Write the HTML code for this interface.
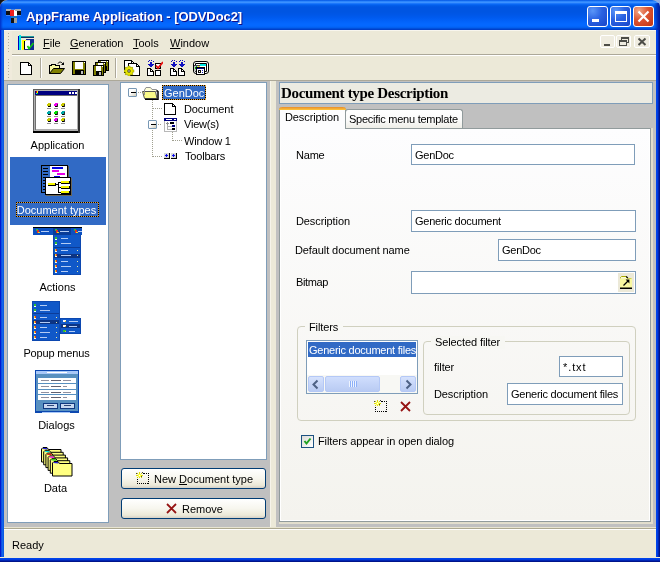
<!DOCTYPE html>
<html>
<head>
<meta charset="utf-8">
<title>AppFrame Application - [ODVDoc2]</title>
<style>
html,body{margin:0;padding:0;}
body{width:660px;height:562px;overflow:hidden;position:relative;background:linear-gradient(to right,#101010 50%,#8aaae8 50%);font-family:"Liberation Sans",sans-serif;font-size:11px;color:#000;}
#win,#win div,#win svg.ic{position:absolute;box-sizing:border-box;}
#win{left:0;top:0;width:660px;height:562px;overflow:hidden;background:#c0c0c0;border-radius:7px 7px 0 0;}
.t{white-space:nowrap;line-height:13px;height:13px;}
#win{will-change:transform;}
#title{left:0;top:0;width:660px;height:30px;border-radius:8px 8px 0 0;
background:linear-gradient(to bottom,#0054e3 0px,#2d86fc 1.5px,#3c91ff 2.5px,#1c78fb 3.5px,#0866f3 4.5px,#025de9 5.5px,#0055e2 7px,#0055e2 12px,#0057e8 15px,#005bf0 18px,#0262f9 21px,#0468ff 24px,#0468ff 26px,#0260f0 27.5px,#0050dc 28.5px,#0038c0 30px);}
#titletext{left:26px;top:9px;font-weight:bold;font-size:13px;color:#fff;letter-spacing:-0.07px;text-shadow:1px 1px 0 #0f1089;line-height:16px;height:16px;white-space:nowrap;}
.cap{top:6px;width:21px;height:21px;border:1px solid #fff;border-radius:3px;background:radial-gradient(circle at 25% 20%,#5a96f8 0%,#2a62e2 45%,#1845c8 100%);}
#bl{left:0;top:30px;width:4px;height:532px;background:linear-gradient(to right,#0019cf 0,#0019cf 1px,#0831d9 1px,#166aee 2px,#0855dd 4px);}
#br{left:656px;top:30px;width:4px;height:532px;background:linear-gradient(to right,#0044ea 0,#0044ea 1px,#003ce0 1px,#003ce0 2px,#0026b4 2px,#0026b4 3px,#00148a 3px);}
#bb{left:0;top:557px;width:660px;height:5px;background:linear-gradient(to bottom,#f6efd2 0,#f6efd2 1px,#0044ea 1px,#0044ea 2px,#003ce0 2px,#003ce0 3px,#0026b4 3px,#0026b4 4px,#00148a 4px);}
#menubar{left:4px;top:30px;width:652px;height:25px;background:#ece9d8;border-top:1px solid #f8f6ee;border-bottom:1px solid #aca899;}
#toolbar{left:4px;top:55px;width:652px;height:26px;background:#ece9d8;border-top:1px solid #fff;border-bottom:1px solid #aca899;}
.grip{left:8px;width:1px;background:repeating-linear-gradient(to bottom,#b4b0a0 0,#b4b0a0 1px,transparent 1px,transparent 3px);}
#gstrip{left:4px;top:31px;width:8px;height:49px;background:#f0ebdc;}
.menu{top:6px;}
.sep{width:2px;height:20px;border-left:1px solid #aca899;border-right:1px solid #fff;}
.mdi{top:35px;width:15px;height:13px;border:1px solid #fff;border-radius:2px;background:#efece0;}
.box{background:#fff;border:1px solid #7f9db9;}
.lbl{text-align:center;left:0;width:100px;}
.btn{border:1px solid #003c74;border-radius:3px;background:linear-gradient(to bottom,#fff 0%,#f7f6ee 50%,#ece9d8 85%,#d6d0c5 100%);}
.edit{background:#fff;border:1px solid #7f9db9;}
.edit .t{left:3px;top:4px;letter-spacing:-0.25px;}
.f{letter-spacing:-0.1px;}
.grp{border:1px solid #d0d0bf;border-radius:4px;}
.gl{padding:0 2px;}
.exp{width:9px;height:9px;border:1px solid #7898b5;border-radius:1px;background:linear-gradient(135deg,#fff 0%,#fff 40%,#d4cfbc 100%);}
.dv{width:1px;background:repeating-linear-gradient(to bottom,#a0a090 0,#a0a090 1px,transparent 1px,transparent 2px);}
.dh{height:1px;background:repeating-linear-gradient(to right,#a0a090 0,#a0a090 1px,transparent 1px,transparent 2px);}
#status{left:4px;top:527px;width:652px;height:31px;background:#ece9d8;border-top:1px solid #e8e4d0;}
#status:before{content:'';position:absolute;left:0;top:0;width:652px;height:2px;background:linear-gradient(#aca890 0,#aca890 1px,#fff 1px,#fff 2px);}
.tr{letter-spacing:-0.2px;}
.fr{background:
 repeating-linear-gradient(to right,#000 0,#000 1px,#e8a030 1px,#e8a030 2px) left top/100% 1px no-repeat,
 repeating-linear-gradient(to right,#000 0,#000 1px,#e8a030 1px,#e8a030 2px) left bottom/100% 1px no-repeat,
 repeating-linear-gradient(to bottom,#000 0,#000 1px,#e8a030 1px,#e8a030 2px) left top/1px 100% no-repeat,
 repeating-linear-gradient(to bottom,#000 0,#000 1px,#e8a030 1px,#e8a030 2px) right top/1px 100% no-repeat;}

</style>
</head>
<body>
<div id="win">
<div id="title"></div>
<svg class="ic" style="left:6px;top:8px" width="16" height="16" viewBox="0 0 16 16" shape-rendering="crispEdges"><rect x="0" y="1" width="15" height="7" fill="#c8d8f0" opacity="0.35"/><rect x="0" y="1" width="5" height="2" fill="#b0b0b0"/><rect x="0" y="3" width="5" height="4" fill="#101010"/><rect x="4" y="2" width="4" height="6" fill="#f02020"/><rect x="8" y="2" width="3" height="6" fill="#ffffff"/><rect x="9" y="1" width="6" height="2" fill="#b0b0b0"/><rect x="11" y="3" width="4" height="4" fill="#101010"/><rect x="5" y="8" width="6" height="2" fill="#1878c8"/><rect x="5" y="10" width="3" height="5" fill="#101010"/><rect x="8" y="10" width="3" height="5" fill="#a0a0a0"/></svg>
<div id="titletext">AppFrame Application - [ODVDoc2]</div>
<div class="cap" style="left:587px"><div style="left:4px;top:12px;width:7px;height:3px;background:#fff"></div></div>
<div class="cap" style="left:610px"><div style="left:4px;top:4px;width:12px;height:11px;border:1px solid #fff;border-top-width:3px"></div></div>
<div class="cap" style="left:633px;background:radial-gradient(circle at 25% 20%,#f0a888 0%,#dc5432 45%,#c03410 100%)"><svg class="ic" width="19" height="19" viewBox="0 0 19 19" style="left:0;top:0"><path d="M4.5 4.5 L14.5 14.5 M14.5 4.5 L4.5 14.5" stroke="#fff" stroke-width="2.2" fill="none"/></svg></div>
<div id="bl"></div><div id="br"></div><div id="bb"></div>
<div style="left:0;top:3px;width:3px;height:27px;background:linear-gradient(to right,#0030c8,rgba(0,60,220,0))"></div><div style="left:654px;top:3px;width:6px;height:27px;background:linear-gradient(to left,#001c9a 0,#0028b0 30%,rgba(0,50,200,0) 100%)"></div>
<div id="menubar"><div class="t menu" style="left:39px"><u>F</u>ile</div><div class="t menu" style="left:66px;letter-spacing:-0.12px"><u>G</u>eneration</div><div class="t menu" style="left:129px"><u>T</u>ools</div><div class="t menu" style="left:166px"><u>W</u>indow</div></div>
<svg class="ic" style="left:18px;top:35px" width="16" height="15" viewBox="0 0 16 15" shape-rendering="crispEdges"><rect x="0" y="1" width="1" height="14" fill="#0000c0"/><rect x="1" y="0" width="2" height="15" fill="#00e8e8"/><rect x="3" y="1" width="13" height="1" fill="#20a0a0"/><rect x="3" y="2" width="13" height="1" fill="#103060"/><rect x="4" y="5" width="4" height="10" fill="#ffff00"/><rect x="6" y="6" width="1" height="8" fill="#000000"/><rect x="7" y="6" width="5" height="8" fill="#ffffff"/><rect x="12" y="4" width="4" height="11" fill="#102890"/><rect x="6" y="14" width="10" height="1" fill="#102890"/><rect x="8" y="4" width="8" height="1" fill="#102890"/><path d="M9.5 11 L11 13.5 L15.5 8" stroke="#10c810" stroke-width="1.6" fill="none" shape-rendering="auto"/></svg>
<div class="mdi" style="left:600px"><div style="left:3px;top:8px;width:6px;height:2px;background:#4d4d48"></div></div>
<div class="mdi" style="left:616px"><div style="left:4px;top:1px;width:8px;height:6px;border:1px solid #4d4d48;border-top-width:2px"></div><div style="left:2px;top:4px;width:8px;height:6px;border:1px solid #4d4d48;border-top-width:2px;background:#efece0"></div></div>
<div class="mdi" style="left:634px;width:16px"><svg class="ic" width="14" height="11" viewBox="0 0 14 11" style="left:0;top:0"><path d="M3.5 2.5 L10.5 9 M10.5 2.5 L3.5 9" stroke="#4d4d48" stroke-width="2" fill="none"/></svg></div>
<div id="toolbar"></div>
<div id="gstrip"></div><div class="grip" style="top:33px;height:19px"></div><div class="grip" style="top:59px;height:19px"></div>
<div class="sep" style="left:40px;top:58px"></div><div class="sep" style="left:115px;top:58px"></div>
<svg class="ic" style="left:20px;top:62px" width="12" height="13" viewBox="0 0 12 13" shape-rendering="crispEdges"><path d="M0.5 0.5 H8.5 L11.5 3.5 V12.5 H0.5 Z" fill="#fff" stroke="#000" stroke-width="1" shape-rendering="crispEdges"/><path d="M8.5 0.5 V3.5 H11.5" fill="none" stroke="#000" stroke-width="1"/></svg>
<svg class="ic" style="left:49px;top:61px" width="16" height="13" viewBox="0 0 16 13" shape-rendering="crispEdges"><path d="M0.5 12.5 V4.5 H2 L3 3.5 H6 L7 4.5 H10.5 V7" fill="#f8f8a0" stroke="#000" stroke-width="1"/><path d="M0.5 12.5 L4.5 7.5 H15.5 L11.5 12.5 Z" fill="#808000" stroke="#000" stroke-width="1" shape-rendering="auto"/><path d="M9 2.5 C10 0.5 13 0.5 14 3.5" fill="none" stroke="#000" stroke-width="1" shape-rendering="auto"/><path d="M12 4 H15 V1 Z" fill="#000" shape-rendering="auto"/></svg>
<svg class="ic" style="left:72px;top:61px" width="14" height="14" viewBox="0 0 14 14" shape-rendering="crispEdges"><rect x="0" y="0" width="14" height="14" fill="#000"/><rect x="1" y="1" width="12" height="12" fill="#808000"/><rect x="3" y="1" width="8" height="6.5" fill="#fff"/><rect x="3" y="9" width="9" height="4" fill="#000"/><rect x="9" y="10" width="2" height="3" fill="#c0c0c0"/><rect x="12" y="1" width="1" height="1" fill="#fff"/></svg>
<svg class="ic" style="left:93px;top:60px" width="16" height="16" viewBox="0 0 16 16" shape-rendering="crispEdges"><rect x="5" y="0" width="11" height="11" fill="#000"/><rect x="6" y="1" width="9" height="9" fill="#808000"/><rect x="8" y="1" width="5" height="5.0" fill="#fff"/><rect x="8" y="6" width="6" height="4" fill="#000"/><rect x="11" y="7" width="2" height="3" fill="#c0c0c0"/><rect x="14" y="1" width="1" height="1" fill="#fff"/><rect x="2" y="2" width="11" height="11" fill="#000"/><rect x="3" y="3" width="9" height="9" fill="#808000"/><rect x="5" y="3" width="5" height="5.0" fill="#fff"/><rect x="5" y="8" width="6" height="4" fill="#000"/><rect x="8" y="9" width="2" height="3" fill="#c0c0c0"/><rect x="11" y="3" width="1" height="1" fill="#fff"/><rect x="0" y="5" width="11" height="11" fill="#000"/><rect x="1" y="6" width="9" height="9" fill="#808000"/><rect x="3" y="6" width="5" height="5.0" fill="#fff"/><rect x="3" y="11" width="6" height="4" fill="#000"/><rect x="6" y="12" width="2" height="3" fill="#c0c0c0"/><rect x="9" y="6" width="1" height="1" fill="#fff"/></svg>
<svg class="ic" style="left:124px;top:60px" width="16" height="16" viewBox="0 0 16 16" shape-rendering="crispEdges"><path d="M0.5 0.5 H7.5 L10.5 3.5 V12.5 H0.5 Z" fill="#fff" stroke="#000" stroke-width="1" shape-rendering="crispEdges"/><path d="M7.5 0.5 V3.5 H10.5" fill="none" stroke="#000" stroke-width="1"/><path d="M4.5 3.5 H12.5 L15.5 6.5 V15.5 H4.5 Z" fill="#fff" stroke="#000" stroke-width="1" shape-rendering="crispEdges"/><path d="M12.5 3.5 V6.5 H15.5" fill="none" stroke="#000" stroke-width="1"/><g shape-rendering="auto"><rect x="7.80" y="9.90" width="2.2" height="2.2" fill="#d8d800" stroke="#909000" stroke-width="0.4"/><rect x="6.66" y="12.66" width="2.2" height="2.2" fill="#d8d800" stroke="#909000" stroke-width="0.4"/><rect x="3.90" y="13.80" width="2.2" height="2.2" fill="#d8d800" stroke="#909000" stroke-width="0.4"/><rect x="1.14" y="12.66" width="2.2" height="2.2" fill="#d8d800" stroke="#909000" stroke-width="0.4"/><rect x="0.00" y="9.90" width="2.2" height="2.2" fill="#d8d800" stroke="#909000" stroke-width="0.4"/><rect x="1.14" y="7.14" width="2.2" height="2.2" fill="#d8d800" stroke="#909000" stroke-width="0.4"/><rect x="3.90" y="6.00" width="2.2" height="2.2" fill="#d8d800" stroke="#909000" stroke-width="0.4"/><rect x="6.66" y="7.14" width="2.2" height="2.2" fill="#d8d800" stroke="#909000" stroke-width="0.4"/><circle cx="5" cy="11" r="3.4" fill="#e8e800"/><circle cx="5" cy="11" r="1.7" fill="#404020"/><circle cx="5" cy="11" r="0.8" fill="#e8e8e8"/></g></svg>
<svg class="ic" style="left:147px;top:60px" width="16" height="16" viewBox="0 0 16 16" shape-rendering="crispEdges"><rect x="0.5" y="1" width="1" height="1" fill="#1010c0"/><rect x="2.0" y="0" width="1" height="1" fill="#1010c0"/><rect x="4.0" y="0" width="1" height="1" fill="#1010c0"/><rect x="5.5" y="1" width="1" height="1" fill="#1010c0"/><rect x="2.5" y="2" width="2" height="3" fill="#1010c0"/><rect x="0.5" y="4" width="6" height="1" fill="#1010c0"/><rect x="1.5" y="5" width="4" height="1" fill="#1010c0"/><rect x="2.5" y="6" width="2" height="1" fill="#1010c0"/><path d="M0.5 8.5 H3.5 L6.5 11.5 V15.5 H0.5 Z" fill="#fff" stroke="#000" stroke-width="1" shape-rendering="crispEdges"/><path d="M3.5 8.5 V11.5 H6.5" fill="none" stroke="#000" stroke-width="1"/><rect x="8" y="3" width="6" height="6" fill="#000"/><rect x="9" y="4" width="4" height="4" fill="#fff"/><rect x="8" y="10" width="6" height="6" fill="#000"/><rect x="9" y="11" width="4" height="4" fill="#fff"/><path d="M9 5.5 L11 8 L16 2" stroke="#e81010" stroke-width="1.8" fill="none" shape-rendering="auto"/></svg>
<svg class="ic" style="left:170px;top:60px" width="16" height="16" viewBox="0 0 16 16" shape-rendering="crispEdges"><rect x="0.5" y="1" width="1" height="1" fill="#1010c0"/><rect x="2.0" y="0" width="1" height="1" fill="#1010c0"/><rect x="4.0" y="0" width="1" height="1" fill="#1010c0"/><rect x="5.5" y="1" width="1" height="1" fill="#1010c0"/><rect x="2.5" y="2" width="2" height="3" fill="#1010c0"/><rect x="0.5" y="4" width="6" height="1" fill="#1010c0"/><rect x="1.5" y="5" width="4" height="1" fill="#1010c0"/><rect x="2.5" y="6" width="2" height="1" fill="#1010c0"/><rect x="8.5" y="1" width="1" height="1" fill="#1010c0"/><rect x="10.0" y="0" width="1" height="1" fill="#1010c0"/><rect x="12.0" y="0" width="1" height="1" fill="#1010c0"/><rect x="13.5" y="1" width="1" height="1" fill="#1010c0"/><rect x="10.5" y="2" width="2" height="3" fill="#1010c0"/><rect x="8.5" y="4" width="6" height="1" fill="#1010c0"/><rect x="9.5" y="5" width="4" height="1" fill="#1010c0"/><rect x="10.5" y="6" width="2" height="1" fill="#1010c0"/><path d="M0.5 8.5 H3.5 L6.5 11.5 V15.5 H0.5 Z" fill="#fff" stroke="#000" stroke-width="1" shape-rendering="crispEdges"/><path d="M3.5 8.5 V11.5 H6.5" fill="none" stroke="#000" stroke-width="1"/><path d="M8.5 8.5 H11.5 L14.5 11.5 V15.5 H8.5 Z" fill="#fff" stroke="#000" stroke-width="1" shape-rendering="crispEdges"/><path d="M11.5 8.5 V11.5 H14.5" fill="none" stroke="#000" stroke-width="1"/></svg>
<svg class="ic" style="left:193px;top:61px" width="16" height="14" viewBox="0 0 16 14" shape-rendering="crispEdges"><rect x="0.5" y="0.5" width="15" height="12" rx="2.5" fill="#fff" stroke="#000" stroke-width="1" shape-rendering="auto"/><rect x="2" y="2" width="12" height="9" rx="1" fill="#000" shape-rendering="auto"/><rect x="3" y="3" width="10" height="1" fill="#fff"/><rect x="12" y="3" width="1" height="7" fill="#fff"/><rect x="1" y="4" width="6" height="6" fill="#c0c0c0"/><rect x="1" y="4" width="6" height="1" fill="#404040"/><rect x="7" y="3" width="6" height="2" fill="#00e8e8"/><rect x="7" y="5" width="5" height="5" fill="#fff"/><rect x="3" y="5" width="1" height="1" fill="#008080"/><rect x="5" y="5" width="1" height="1" fill="#ffff00"/><rect x="2" y="6" width="1" height="2" fill="#00a000"/><rect x="3" y="6" width="9" height="8" fill="#000"/><rect x="4" y="7" width="7" height="1" fill="#000080"/><rect x="4" y="8" width="7" height="5" fill="#fff"/><rect x="5" y="9" width="3" height="3" fill="#101010"/><rect x="6" y="10" width="1" height="1" fill="#fff"/><rect x="9" y="9" width="1" height="1" fill="#2020c0"/><rect x="9" y="11" width="1" height="1" fill="#2020c0"/></svg>
<div class="box" style="left:7px;top:84px;width:102px;height:439px;"></div>
<div style="left:10px;top:157px;width:96px;height:68px;background:#316ac5"></div>
<div class="fr" style="left:16px;top:202px;width:83px;height:15px;"></div>
<svg class="ic" style="left:33px;top:89px" width="47" height="44" viewBox="0 0 47 44" shape-rendering="crispEdges"><rect x="0" y="0" width="47" height="44" fill="#606060"/><rect x="0" y="42" width="47" height="2" fill="#000"/><rect x="45" y="0" width="2" height="44" fill="#303030"/><rect x="1" y="1" width="44" height="41" fill="#b0b0b0"/><rect x="2" y="2" width="42" height="4" fill="#000080"/><rect x="3" y="2" width="1" height="2" fill="#f00000"/><rect x="4" y="2" width="1" height="2" fill="#ffff00"/><rect x="3" y="4" width="1" height="1" fill="#00ffff"/><rect x="4" y="4" width="1" height="1" fill="#00c000"/><rect x="36" y="3" width="2" height="2" fill="#fff"/><rect x="39" y="3" width="2" height="2" fill="#fff"/><rect x="42" y="3" width="2" height="2" fill="#fff"/><rect x="3" y="7" width="41" height="33" fill="#fff"/><rect x="2" y="6" width="42" height="1" fill="#707070"/><rect x="2" y="6" width="1" height="35" fill="#707070"/><rect x="15" y="14" width="3" height="3" fill="#c8c800"/><rect x="14" y="15" width="1" height="2" fill="#c8c800"/><rect x="15" y="17" width="3" height="1" fill="#000"/><rect x="17" y="15" width="1" height="3" fill="#303030"/><rect x="14" y="19" width="4" height="1" fill="#909090"/><rect x="22" y="14" width="3" height="3" fill="#f000f0"/><rect x="21" y="15" width="1" height="2" fill="#f000f0"/><rect x="22" y="17" width="3" height="1" fill="#000"/><rect x="24" y="15" width="1" height="3" fill="#303030"/><rect x="21" y="19" width="4" height="1" fill="#909090"/><rect x="29" y="14" width="3" height="3" fill="#c8c800"/><rect x="28" y="15" width="1" height="2" fill="#c8c800"/><rect x="29" y="17" width="3" height="1" fill="#000"/><rect x="31" y="15" width="1" height="3" fill="#303030"/><rect x="28" y="19" width="4" height="1" fill="#909090"/><rect x="15" y="22" width="3" height="3" fill="#00a8a8"/><rect x="14" y="23" width="1" height="2" fill="#00a8a8"/><rect x="15" y="25" width="3" height="1" fill="#000"/><rect x="17" y="23" width="1" height="3" fill="#303030"/><rect x="14" y="27" width="4" height="1" fill="#909090"/><rect x="22" y="22" width="3" height="3" fill="#00e000"/><rect x="21" y="23" width="1" height="2" fill="#00e000"/><rect x="22" y="25" width="3" height="1" fill="#000"/><rect x="24" y="23" width="1" height="3" fill="#303030"/><rect x="21" y="27" width="4" height="1" fill="#909090"/><rect x="29" y="22" width="3" height="3" fill="#00a8a8"/><rect x="28" y="23" width="1" height="2" fill="#00a8a8"/><rect x="29" y="25" width="3" height="1" fill="#000"/><rect x="31" y="23" width="1" height="3" fill="#303030"/><rect x="28" y="27" width="4" height="1" fill="#909090"/><rect x="15" y="29" width="3" height="3" fill="#c8c800"/><rect x="14" y="30" width="1" height="2" fill="#c8c800"/><rect x="15" y="32" width="3" height="1" fill="#000"/><rect x="17" y="30" width="1" height="3" fill="#303030"/><rect x="14" y="34" width="4" height="1" fill="#909090"/><rect x="22" y="29" width="3" height="3" fill="#f000f0"/><rect x="21" y="30" width="1" height="2" fill="#f000f0"/><rect x="22" y="32" width="3" height="1" fill="#000"/><rect x="24" y="30" width="1" height="3" fill="#303030"/><rect x="21" y="34" width="4" height="1" fill="#909090"/><rect x="29" y="29" width="3" height="3" fill="#c8c800"/><rect x="28" y="30" width="1" height="2" fill="#c8c800"/><rect x="29" y="32" width="3" height="1" fill="#000"/><rect x="31" y="30" width="1" height="3" fill="#303030"/><rect x="28" y="34" width="4" height="1" fill="#909090"/></svg>
<svg class="ic" style="left:41px;top:165px" width="32" height="32" viewBox="0 0 32 32" shape-rendering="crispEdges"><rect x="0" y="0" width="27" height="28" fill="#000"/><rect x="1" y="1" width="8" height="26" fill="#316ac5"/><rect x="2" y="3" width="5" height="1" fill="#000"/><rect x="2" y="6" width="5" height="1" fill="#000"/><rect x="2" y="9" width="5" height="1" fill="#000"/><rect x="2" y="12" width="5" height="1" fill="#000"/><rect x="2" y="15" width="5" height="1" fill="#000"/><rect x="2" y="18" width="5" height="1" fill="#000"/><rect x="2" y="21" width="5" height="1" fill="#000"/><rect x="2" y="24" width="5" height="1" fill="#000"/><rect x="9" y="1" width="17" height="12" fill="#fff"/><rect x="11" y="2" width="11" height="2" fill="#0000e0"/><rect x="11" y="5" width="7" height="2" fill="#e800e8"/><rect x="16" y="8" width="8" height="2" fill="#e800e8"/><rect x="13" y="11" width="6" height="1" fill="#0000e0"/><rect x="27" y="1" width="1" height="12" fill="#605848"/><rect x="5" y="13" width="26" height="18" fill="#6b6658"/><rect x="4" y="12" width="26" height="18" fill="#000"/><rect x="5" y="13" width="24" height="16" fill="#fff"/><rect x="6.5" y="17.5" width="8" height="3" fill="#000"/><rect x="6.5" y="17.5" width="7.5" height="2.5" fill="#f8f800"/><rect x="20" y="15.5" width="8.5" height="3" fill="#000"/><rect x="20" y="15.5" width="8.0" height="2.5" fill="#f8f800"/><rect x="20" y="20.5" width="8.5" height="3" fill="#000"/><rect x="20" y="20.5" width="8.0" height="2.5" fill="#f8f800"/><rect x="20" y="25.5" width="8.5" height="3" fill="#000"/><rect x="20" y="25.5" width="8.0" height="2.5" fill="#f8f800"/><rect x="14.5" y="19" width="3" height="1" fill="#000"/><rect x="17" y="17" width="1" height="10" fill="#000"/><rect x="17" y="17" width="3" height="1" fill="#000"/><rect x="17" y="22" width="3" height="1" fill="#000"/><rect x="17" y="26.5" width="3" height="1" fill="#000"/></svg>
<svg class="ic" style="left:33px;top:227px" width="49" height="48" viewBox="0 0 49 48" shape-rendering="crispEdges"><rect x="0" y="0" width="49" height="8" fill="#0c50c0"/><rect x="0" y="0" width="49" height="1" fill="#000"/><rect x="20" y="1" width="18" height="7" fill="#0a3c98"/><rect x="3" y="2" width="2" height="2" fill="#30c030"/><rect x="4" y="3" width="2" height="3" fill="#e03020"/><rect x="5" y="5" width="2" height="1" fill="#f0d020"/><rect x="21.5" y="2" width="2" height="2" fill="#30c030"/><rect x="22.5" y="3" width="2" height="3" fill="#e03020"/><rect x="23.5" y="5" width="2" height="1" fill="#f0d020"/><rect x="40.5" y="2" width="2" height="2" fill="#30c030"/><rect x="41.5" y="3" width="2" height="3" fill="#e03020"/><rect x="42.5" y="5" width="2" height="1" fill="#f0d020"/><rect x="8" y="3.5" width="8" height="1" fill="#b4ccf4"/><rect x="27" y="3.5" width="9" height="1" fill="#b4ccf4"/><rect x="45" y="3.5" width="4" height="1" fill="#b4ccf4"/><rect x="20" y="8" width="28" height="40" fill="#0c48b0"/><rect x="21" y="8" width="26" height="39" fill="#1058c8"/><rect x="22" y="10" width="1" height="2" fill="#f0d020"/><rect x="23" y="10" width="1" height="3" fill="#e03020"/><rect x="22" y="12" width="2" height="1" fill="#f8f8f8"/><rect x="28" y="11" width="7" height="1" fill="#b4ccf4"/><rect x="22" y="15" width="1" height="2" fill="#f0d020"/><rect x="23" y="15" width="1" height="3" fill="#e03020"/><rect x="22" y="17" width="2" height="1" fill="#f8f8f8"/><rect x="28" y="16" width="10" height="1" fill="#b4ccf4"/><rect x="22" y="22" width="1" height="2" fill="#f0d020"/><rect x="23" y="22" width="1" height="3" fill="#e03020"/><rect x="22" y="24" width="2" height="1" fill="#f8f8f8"/><rect x="28" y="23" width="7" height="1" fill="#b4ccf4"/><rect x="44" y="23" width="1" height="1" fill="#e8e8a0"/><rect x="21" y="26.5" width="26" height="4" fill="#0c3484"/><rect x="22" y="27" width="1" height="2" fill="#f0d020"/><rect x="23" y="27" width="1" height="3" fill="#e03020"/><rect x="22" y="29" width="2" height="1" fill="#f8f8f8"/><rect x="28" y="28" width="10" height="1" fill="#b4ccf4"/><rect x="44" y="28" width="1" height="1" fill="#e8e8a0"/><rect x="22" y="32.5" width="1" height="2" fill="#f0d020"/><rect x="23" y="32.5" width="1" height="3" fill="#e03020"/><rect x="22" y="34.5" width="2" height="1" fill="#f8f8f8"/><rect x="28" y="33.5" width="7" height="1" fill="#b4ccf4"/><rect x="44" y="33.5" width="1" height="1" fill="#e8e8a0"/><rect x="22" y="37.5" width="1" height="2" fill="#f0d020"/><rect x="23" y="37.5" width="1" height="3" fill="#e03020"/><rect x="22" y="39.5" width="2" height="1" fill="#f8f8f8"/><rect x="28" y="38.5" width="10" height="1" fill="#b4ccf4"/><rect x="44" y="38.5" width="1" height="1" fill="#e8e8a0"/><rect x="22" y="42.5" width="1" height="2" fill="#f0d020"/><rect x="23" y="42.5" width="1" height="3" fill="#e03020"/><rect x="22" y="44.5" width="2" height="1" fill="#f8f8f8"/><rect x="28" y="43.5" width="7" height="1" fill="#b4ccf4"/><rect x="44" y="43.5" width="1" height="1" fill="#e8e8a0"/><rect x="21" y="19.5" width="26" height="1" fill="#0c3c98"/><rect x="22" y="10" width="2" height="2" fill="#30c030"/><rect x="22" y="15" width="2" height="2" fill="#30c030"/></svg>
<svg class="ic" style="left:32px;top:301px" width="50" height="41" viewBox="0 0 50 41" shape-rendering="crispEdges"><rect x="0" y="0" width="28" height="40" fill="#0c48b0"/><rect x="1" y="1" width="26" height="38" fill="#1058c8"/><rect x="2" y="2.5" width="1" height="2" fill="#f0d020"/><rect x="3" y="2.5" width="1" height="3" fill="#e03020"/><rect x="2" y="4.5" width="2" height="1" fill="#f8f8f8"/><rect x="8" y="3.5" width="7" height="1" fill="#b4ccf4"/><rect x="2" y="7.5" width="1" height="2" fill="#f0d020"/><rect x="3" y="7.5" width="1" height="3" fill="#e03020"/><rect x="2" y="9.5" width="2" height="1" fill="#f8f8f8"/><rect x="8" y="8.5" width="10" height="1" fill="#b4ccf4"/><rect x="2" y="14.5" width="1" height="2" fill="#f0d020"/><rect x="3" y="14.5" width="1" height="3" fill="#e03020"/><rect x="2" y="16.5" width="2" height="1" fill="#f8f8f8"/><rect x="8" y="15.5" width="7" height="1" fill="#b4ccf4"/><rect x="24" y="15.5" width="1" height="1" fill="#e8e8a0"/><rect x="1" y="19.0" width="26" height="4" fill="#0c3484"/><rect x="2" y="19.5" width="1" height="2" fill="#f0d020"/><rect x="3" y="19.5" width="1" height="3" fill="#e03020"/><rect x="2" y="21.5" width="2" height="1" fill="#f8f8f8"/><rect x="8" y="20.5" width="10" height="1" fill="#b4ccf4"/><rect x="24" y="20.5" width="1" height="1" fill="#e8e8a0"/><rect x="2" y="24.5" width="1" height="2" fill="#f0d020"/><rect x="3" y="24.5" width="1" height="3" fill="#e03020"/><rect x="2" y="26.5" width="2" height="1" fill="#f8f8f8"/><rect x="8" y="25.5" width="7" height="1" fill="#b4ccf4"/><rect x="24" y="25.5" width="1" height="1" fill="#e8e8a0"/><rect x="2" y="29.5" width="1" height="2" fill="#f0d020"/><rect x="3" y="29.5" width="1" height="3" fill="#e03020"/><rect x="2" y="31.5" width="2" height="1" fill="#f8f8f8"/><rect x="8" y="30.5" width="10" height="1" fill="#b4ccf4"/><rect x="24" y="30.5" width="1" height="1" fill="#e8e8a0"/><rect x="2" y="34.5" width="1" height="2" fill="#f0d020"/><rect x="3" y="34.5" width="1" height="3" fill="#e03020"/><rect x="2" y="36.5" width="2" height="1" fill="#f8f8f8"/><rect x="8" y="35.5" width="7" height="1" fill="#b4ccf4"/><rect x="24" y="35.5" width="1" height="1" fill="#e8e8a0"/><rect x="1" y="12" width="26" height="1" fill="#0c3c98"/><rect x="2" y="2.5" width="2" height="2" fill="#30c030"/><rect x="2" y="7.5" width="2" height="2" fill="#30c030"/><rect x="28" y="17" width="21" height="16" fill="#0c48b0"/><rect x="29" y="18" width="19" height="14" fill="#1058c8"/><rect x="29" y="23" width="19" height="4" fill="#0c3484"/><rect x="31" y="19" width="3" height="2" fill="#f8f8f8"/><rect x="33" y="20" width="1" height="1" fill="#e0c020"/><rect x="37" y="20" width="9" height="1" fill="#b4ccf4"/><rect x="31" y="24" width="3" height="2" fill="#f8f8f8"/><rect x="33" y="25" width="1" height="1" fill="#e0c020"/><rect x="37" y="25" width="8" height="1" fill="#b4ccf4"/><rect x="31" y="29" width="3" height="2" fill="#30c030"/><rect x="33" y="30" width="1" height="1" fill="#e0c020"/><rect x="37" y="30" width="6" height="1" fill="#b4ccf4"/></svg>
<svg class="ic" style="left:35px;top:370px" width="44" height="43" viewBox="0 0 44 43" shape-rendering="crispEdges"><rect x="0" y="0" width="44" height="43" fill="#0c48b0"/><rect x="1" y="1" width="42" height="3" fill="#a8c8f8"/><rect x="12" y="2" width="20" height="1" fill="#fff"/><rect x="1" y="4" width="42" height="37" fill="#5890c0"/><rect x="1" y="41" width="42" height="1" fill="#0c48b0"/><rect x="7" y="41.5" width="28" height="1" fill="#a8c8f8"/><rect x="3" y="8" width="37.5" height="4.6" fill="#fff"/><rect x="6" y="10" width="8" height="1" fill="#9090a0"/><rect x="16" y="10" width="10" height="1" fill="#606070"/><rect x="28" y="10" width="8" height="1" fill="#9090a0"/><rect x="3" y="14" width="37.5" height="4.6" fill="#fff"/><rect x="6" y="16" width="8" height="1" fill="#9090a0"/><rect x="16" y="16" width="10" height="1" fill="#606070"/><rect x="28" y="16" width="4" height="1" fill="#9090a0"/><rect x="3" y="19.5" width="37.5" height="4.6" fill="#fff"/><rect x="6" y="21.5" width="8" height="1" fill="#9090a0"/><rect x="16" y="21.5" width="10" height="1" fill="#606070"/><rect x="28" y="21.5" width="8" height="1" fill="#9090a0"/><rect x="3" y="25" width="37.5" height="4.6" fill="#fff"/><rect x="6" y="27" width="8" height="1" fill="#9090a0"/><rect x="16" y="27" width="10" height="1" fill="#606070"/><rect x="28" y="27" width="4" height="1" fill="#9090a0"/><rect x="7.5" y="33" width="15" height="5.5" fill="#103880"/><rect x="8.5" y="34" width="13" height="3.5" fill="#c8d8f0"/><rect x="11.5" y="35.3" width="7" height="1" fill="#304878"/><rect x="25" y="33" width="15" height="5.5" fill="#103880"/><rect x="26" y="34" width="13" height="3.5" fill="#c8d8f0"/><rect x="29" y="35.3" width="7" height="1" fill="#304878"/></svg>
<svg class="ic" style="left:41px;top:447px" width="32" height="30" viewBox="0 0 32 30" shape-rendering="crispEdges"><g shape-rendering="auto"><path d="M0.5 15.0 V2.0 L2.0 0.5 H6.0 L7.5 2.5 H20.0 V15.0 Z" fill="#ffff80" stroke="#000" stroke-width="1"/><path d="M1.3 2.1 L2.3 1.1 H5.7 L6.7 2.5 Z" fill="#2020e0"/><path d="M2.7 17.8 V4.8 L4.2 3.3 H8.2 L9.7 5.3 H22.2 V17.8 Z" fill="#ffff80" stroke="#000" stroke-width="1"/><path d="M3.5 4.9 L4.5 3.9 H7.9 L8.9 5.3 Z" fill="#00e0e0"/><path d="M4.9 20.6 V7.6 L6.4 6.1 H10.4 L11.9 8.1 H24.4 V20.6 Z" fill="#ffff80" stroke="#000" stroke-width="1"/><path d="M5.7 7.699999999999999 L6.7 6.699999999999999 H10.100000000000001 L11.100000000000001 8.1 Z" fill="#e00000"/><path d="M7.1000000000000005 23.4 V10.399999999999999 L8.600000000000001 8.899999999999999 H12.600000000000001 L14.100000000000001 10.899999999999999 H26.6 V23.4 Z" fill="#ffff80" stroke="#000" stroke-width="1"/><path d="M7.9 10.499999999999998 L8.9 9.499999999999998 H12.3 L13.3 10.899999999999999 Z" fill="#f000f0"/><path d="M9.3 26.2 V13.2 L10.8 11.7 H14.8 L16.3 13.7 H28.8 V26.2 Z" fill="#ffff80" stroke="#000" stroke-width="1"/><path d="M10.100000000000001 13.299999999999999 L11.100000000000001 12.299999999999999 H14.5 L15.5 13.7 Z" fill="#00d000"/><path d="M11.5 29.0 V16.0 L13.0 14.5 H17.0 L18.5 16.5 H31.0 V29.0 Z" fill="#ffff80" stroke="#000" stroke-width="1"/><path d="M12.3 16.1 L13.3 15.1 H16.7 L17.7 16.5 Z" fill="#2020e0"/></g></svg>
<div class="t lbl" style="left:7px;width:101px;top:139px;color:#000;">Application</div>
<div class="t lbl" style="left:7px;width:101px;top:204px;color:#fff;margin-left:-1px;">Document types</div>
<div class="t lbl" style="left:7px;width:101px;top:281px;color:#000;">Actions</div>
<div class="t lbl" style="left:7px;width:101px;top:347px;color:#000;letter-spacing:-0.15px;margin-left:-1px;">Popup menus</div>
<div class="t lbl" style="left:7px;width:101px;top:419px;color:#000;margin-left:-1px;">Dialogs</div>
<div class="t lbl" style="left:7px;width:101px;top:482px;color:#000;margin-left:-2px;">Data</div>
<div class="box" style="left:120px;top:82px;width:147px;height:378px;"></div>
<div class="dh" style="left:138px;top:92px;width:4px"></div>
<div class="dv" style="left:152px;top:100px;height:57px"></div>
<div class="dh" style="left:153px;top:108px;width:9px"></div>
<div class="dh" style="left:158px;top:124px;width:4px"></div>
<div class="dh" style="left:153px;top:156px;width:9px"></div>
<div class="dv" style="left:172px;top:132px;height:9px"></div>
<div class="dh" style="left:173px;top:140px;width:9px"></div>
<div class="exp" style="left:128px;top:88px"><div style="left:2px;top:3px;width:5px;height:1px;background:#000"></div></div>
<div class="exp" style="left:148px;top:120px"><div style="left:2px;top:3px;width:5px;height:1px;background:#000"></div></div>
<svg class="ic" style="left:142px;top:87px" width="17" height="13" viewBox="0 0 17 13" shape-rendering="crispEdges"><g shape-rendering="auto"><path d="M2.5 3 L4 0.5 H8.5 L10 2.5 H14.5 V5" fill="#ffffd8" stroke="#909090" stroke-width="1"/><path d="M0.5 4.5 H13.5 L15 11.5 H2.5 Z" fill="#fafa88" stroke="#505050" stroke-width="1"/><path d="M2.5 3 V8" stroke="#909090" stroke-width="1" fill="none"/><path d="M14.8 3.5 L16 4.5 V12.5 H3" stroke="#000" stroke-width="1.5" fill="none"/></g></svg>
<svg class="ic" style="left:164px;top:103px" width="12" height="12" viewBox="0 0 12 12" shape-rendering="crispEdges"><path d="M0.5 0.5 H8.5 L11.5 3.5 V11.5 H0.5 Z" fill="#fff" stroke="#000" stroke-width="1" shape-rendering="crispEdges"/><path d="M8.5 0.5 V3.5 H11.5" fill="none" stroke="#000" stroke-width="1"/></svg>
<svg class="ic" style="left:164px;top:118px" width="13" height="14" viewBox="0 0 13 14" shape-rendering="crispEdges"><rect x="0" y="0" width="13" height="14" fill="#b8b8b8"/><rect x="1" y="1" width="11" height="12" fill="#fff"/><rect x="0" y="0" width="13" height="3" fill="#000080"/><rect x="2" y="1" width="6" height="1" fill="#fff"/><rect x="10" y="1" width="2" height="1" fill="#fff"/><rect x="2" y="5" width="3" height="1" fill="#909090"/><rect x="3" y="4" width="1" height="3" fill="#909090"/><rect x="3" y="7" width="1" height="5" fill="#b0b0b0"/><rect x="3" y="8" width="5" height="1" fill="#b0b0b0"/><rect x="3" y="11" width="5" height="1" fill="#b0b0b0"/><rect x="6" y="4" width="4" height="2" fill="#000"/><rect x="8" y="7" width="3" height="2" fill="#000080"/><rect x="8" y="10" width="3" height="2" fill="#000"/></svg>
<svg class="ic" style="left:164px;top:153px" width="13" height="6" viewBox="0 0 13 6" shape-rendering="crispEdges"><rect x="0" y="0" width="6" height="6" fill="#000"/><rect x="0" y="0" width="5" height="5" fill="#d8d8d8"/><rect x="2" y="1" width="1" height="3" fill="#1010f0"/><rect x="1" y="2" width="3" height="1" fill="#1010f0"/><rect x="7" y="0" width="6" height="6" fill="#000"/><rect x="7" y="0" width="5" height="5" fill="#d8d8d8"/><rect x="9" y="1" width="1" height="3" fill="#1010f0"/><rect x="8" y="2" width="3" height="1" fill="#1010f0"/></svg>
<div style="left:162px;top:85px;width:44px;height:15px;background:#316ac5;"></div><div class="fr" style="left:162px;top:85px;width:44px;height:15px;"></div>
<div class="t" style="left:164px;top:87px;color:#fff;letter-spacing:0">GenDoc</div>
<div class="t tr" style="left:184px;top:103px;letter-spacing:-0.1px">Document</div>
<div class="t tr" style="left:184px;top:118px">View(s)</div>
<div class="t tr" style="left:184px;top:135px">Window 1</div>
<div class="t tr" style="left:185px;top:150px">Toolbars</div>
<div class="btn" style="left:121px;top:468px;width:145px;height:21px;"><div class="t" style="left:32px;top:4px">New <u>D</u>ocument type</div></div>
<svg class="ic" style="left:136px;top:472px" width="13" height="12" viewBox="0 0 13 12" shape-rendering="crispEdges"><rect x="1.5" y="1.5" width="11" height="10" fill="none" stroke="#000" stroke-width="1" stroke-dasharray="1 1"/><rect x="0" y="0" width="7" height="6" fill="#f6f5ee"/><rect x="3" y="0" width="1" height="6" fill="#e0e000"/><rect x="0" y="3" width="7" height="1" fill="#e0e000"/><rect x="1" y="1" width="1" height="1" fill="#d0d000"/><rect x="5" y="1" width="1" height="1" fill="#d0d000"/><rect x="1" y="5" width="1" height="1" fill="#d0d000"/><rect x="5" y="5" width="1" height="1" fill="#d0d000"/><rect x="2" y="2" width="3" height="3" fill="#ffff40"/><rect x="3" y="3" width="1" height="1" fill="#fff"/><rect x="0" y="1" width="1" height="1" fill="#404040"/><rect x="6" y="0" width="1" height="1" fill="#404040"/><rect x="5" y="4" width="1" height="1" fill="#404040"/><rect x="7" y="1" width="1" height="1" fill="#000"/><rect x="1" y="7" width="1" height="1" fill="#000"/></svg>
<div class="btn" style="left:121px;top:498px;width:145px;height:21px;"><div class="t" style="left:60px;top:4px">Remove</div></div>
<svg class="ic" style="left:166px;top:503px" width="11" height="11" viewBox="0 0 11 11" shape-rendering="crispEdges"><path d="M1 1 L10 10 M10 1 L1 10" stroke="#961414" stroke-width="1.8" fill="none" shape-rendering="auto"/></svg>
<div style="left:270px;top:81px;width:6px;height:446px;background:#ece9d8;border-left:1px solid #f6f4ea"></div>
<div style="left:279px;top:82px;width:374px;height:22px;background:#ecebe2;border:1px solid #7f9db9;"><div style="left:1px;top:2px;font-family:'Liberation Serif',serif;font-weight:bold;font-size:15px;letter-spacing:-0.32px;line-height:17px;white-space:nowrap">Document type Description</div></div>
<div style="left:279px;top:128px;width:374px;height:396px;background:#e2decd"></div>
<div id="page" style="left:279px;top:128px;width:372px;height:394px;border:1px solid #919b9c;background:linear-gradient(to bottom,#fdfdfe 0%,#f4f3ee 100%);box-shadow:inset 1px -1px 0 #fff,inset -1px 0 0 #fff"></div>
<div style="left:345px;top:109px;width:118px;height:19px;border:1px solid #919b9c;border-bottom:none;border-radius:3px 3px 0 0;background:linear-gradient(to bottom,#fff 0%,#fafaf9 60%,#eeede6 100%)"><div class="t f" style="left:3px;top:3px;letter-spacing:-0.25px">Specific menu template</div></div>
<div style="left:279px;top:107px;width:67px;height:22px;border:1px solid #919b9c;border-bottom:none;border-top:none;border-radius:3px 3px 0 0;background:#fdfdfe"><div style="left:-1px;top:0;width:67px;height:3px;background:linear-gradient(#e68b2c,#ffc73c);border-radius:3px 3px 0 0"></div><div class="t f" style="left:5px;top:4px">Description</div></div>
<div class="t f" style="left:296px;top:149px;letter-spacing:-0.2px">Name</div>
<div class="edit" style="left:411px;top:144px;width:224px;height:21px"><div class="t">GenDoc</div></div>
<div class="t f" style="left:296px;top:215px">Description</div>
<div class="edit" style="left:411px;top:210px;width:225px;height:22px"><div class="t">Generic document</div></div>
<div class="t f" style="left:295px;top:244px">Default document name</div>
<div class="edit" style="left:498px;top:239px;width:138px;height:22px"><div class="t">GenDoc</div></div>
<div class="t f" style="left:296px;top:276px;letter-spacing:-0.35px">Bitmap</div>
<div class="edit" style="left:411px;top:271px;width:225px;height:23px"></div>
<svg class="ic" style="left:618px;top:273px" width="16" height="19" viewBox="0 0 16 19" shape-rendering="crispEdges"><rect x="0" y="0" width="16" height="19" fill="#ece9d8"/><g shape-rendering="auto"><path d="M2.5 5.5 V4.5 L3.5 3.5 H8 L9.5 5.5 H13.5" fill="#fbfbd0" stroke="#a8a800" stroke-width="1"/><rect x="2" y="5.5" width="12" height="9.5" fill="#f8f8a0"/><rect x="2" y="14.5" width="12" height="1.5" fill="#000"/><path d="M8.2 3.4 L9.8 5.2" stroke="#000" stroke-width="1.2"/><path d="M5.5 12.5 L10 8" stroke="#000" stroke-width="1.2" fill="none"/><path d="M7.6 6.6 H11.4 V10.4 Z" fill="#000"/></g></svg>
<div class="grp" style="left:297px;top:326px;width:339px;height:95px"></div><div class="t gl f" style="left:305px;top:321px;padding:0 5px 0 4px;background:#f8f8f5">Filters</div>
<div class="box" style="left:306px;top:340px;width:112px;height:54px"></div>
<div style="left:308px;top:342px;width:108px;height:15px;background:#316ac5"></div>
<div class="t" style="left:309px;top:344px;color:#fff;width:107px;overflow:hidden;letter-spacing:-0.25px">Generic document files</div>
<div style="left:307px;top:375px;width:110px;height:18px;background:#f8f8f4"></div>
<div style="left:308px;top:376px;width:16px;height:16px;border:1px solid #b4c8f6;border-radius:2px;background:linear-gradient(to bottom,#d6e2fd,#b9cbf3)"><svg class="ic" width="16" height="16" viewBox="0 0 16 16" style="left:-1px;top:-1px"><path d="M9.5 4.5 L5.5 8.5 L9.5 12.5" stroke="#4d6185" stroke-width="2" fill="none"/></svg></div>
<div style="left:400px;top:376px;width:16px;height:16px;border:1px solid #b4c8f6;border-radius:2px;background:linear-gradient(to bottom,#d6e2fd,#b9cbf3)"><svg class="ic" width="16" height="16" viewBox="0 0 16 16" style="left:-1px;top:-1px"><path d="M6.5 4.5 L10.5 8.5 L6.5 12.5" stroke="#4d6185" stroke-width="2" fill="none"/></svg></div>
<div style="left:325px;top:376px;width:55px;height:16px;border:1px solid #b4c8f6;border-radius:2px;background:linear-gradient(to bottom,#d0defd,#b9cbf3)"><div style="left:23px;top:4px;width:8px;height:6px;background:repeating-linear-gradient(to right,#eef4fe 0,#eef4fe 1px,#8cb0f8 1px,#8cb0f8 2px)"></div></div>
<svg class="ic" style="left:374px;top:400px" width="13" height="12" viewBox="0 0 13 12" shape-rendering="crispEdges"><rect x="1.5" y="1.5" width="11" height="10" fill="none" stroke="#000" stroke-width="1" stroke-dasharray="1 1"/><rect x="0" y="0" width="7" height="6" fill="#f6f5ee"/><rect x="3" y="0" width="1" height="6" fill="#e0e000"/><rect x="0" y="3" width="7" height="1" fill="#e0e000"/><rect x="1" y="1" width="1" height="1" fill="#d0d000"/><rect x="5" y="1" width="1" height="1" fill="#d0d000"/><rect x="1" y="5" width="1" height="1" fill="#d0d000"/><rect x="5" y="5" width="1" height="1" fill="#d0d000"/><rect x="2" y="2" width="3" height="3" fill="#ffff40"/><rect x="3" y="3" width="1" height="1" fill="#fff"/><rect x="0" y="1" width="1" height="1" fill="#404040"/><rect x="6" y="0" width="1" height="1" fill="#404040"/><rect x="5" y="4" width="1" height="1" fill="#404040"/><rect x="7" y="1" width="1" height="1" fill="#000"/><rect x="1" y="7" width="1" height="1" fill="#000"/></svg>
<svg class="ic" style="left:400px;top:401px" width="11" height="11" viewBox="0 0 11 11" shape-rendering="crispEdges"><path d="M1 1 L10 10 M10 1 L1 10" stroke="#961414" stroke-width="1.8" fill="none" shape-rendering="auto"/></svg>
<div class="grp" style="left:423px;top:341px;width:207px;height:74px"></div><div class="t gl f" style="left:431px;top:336px;padding:0 5px 0 4px;background:#f7f7f3">Selected filter</div>
<div class="t f" style="left:434px;top:361px">filter</div>
<div class="edit" style="left:559px;top:356px;width:64px;height:21px"><div class="t" style="letter-spacing:0.9px">*.txt</div></div>
<div class="t f" style="left:434px;top:388px">Description</div>
<div class="edit" style="left:507px;top:383px;width:116px;height:22px"><div class="t" style="width:108px;overflow:hidden">Generic document files</div></div>
<div style="left:301px;top:435px;width:13px;height:13px;border:1px solid #1c5180;background:linear-gradient(135deg,#dcdcd7,#fff)"><svg class="ic" width="11" height="11" viewBox="0 0 11 11" style="left:0;top:0"><path d="M2.5 5 L4.5 7.5 L8.5 2.5" stroke="#21a121" stroke-width="2" fill="none"/></svg></div>
<div class="t f" style="left:318px;top:435px">Filters appear in open dialog</div>
<div id="status"><div class="t" style="left:8px;top:11px">Ready</div></div>
</div>
</body>
</html>
